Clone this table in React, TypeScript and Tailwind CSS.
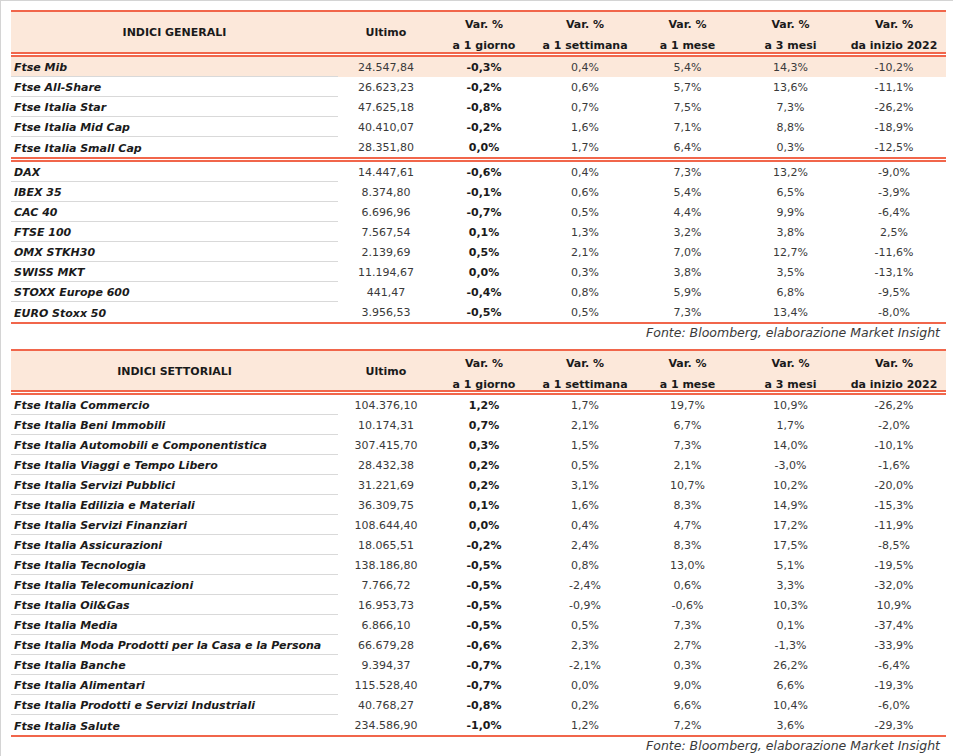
type Row = { name: string; last: string; d1: string; w1: string; m1: string; m3: string; ytd: string };

const r = (name: string, last: string, d1: string, w1: string, m1: string, m3: string, ytd: string): Row => ({
  name,
  last,
  d1,
  w1,
  m1,
  m3,
  ytd,
});

// Italian indices (first block of the first table)
const ITALIA: Row[] = [
  r('Ftse Mib', '24.547,84', '-0,3%', '0,4%', '5,4%', '14,3%', '-10,2%'),
  r('Ftse All-Share', '26.623,23', '-0,2%', '0,6%', '5,7%', '13,6%', '-11,1%'),
  r('Ftse Italia Star', '47.625,18', '-0,8%', '0,7%', '7,5%', '7,3%', '-26,2%'),
  r('Ftse Italia Mid Cap', '40.410,07', '-0,2%', '1,6%', '7,1%', '8,8%', '-18,9%'),
  r('Ftse Italia Small Cap', '28.351,80', '0,0%', '1,7%', '6,4%', '0,3%', '-12,5%'),
];

const EUROPA: Row[] = [
  r('DAX', '14.447,61', '-0,6%', '0,4%', '7,3%', '13,2%', '-9,0%'),
  r('IBEX 35', '8.374,80', '-0,1%', '0,6%', '5,4%', '6,5%', '-3,9%'),
  r('CAC 40', '6.696,96', '-0,7%', '0,5%', '4,4%', '9,9%', '-6,4%'),
  r('FTSE 100', '7.567,54', '0,1%', '1,3%', '3,2%', '3,8%', '2,5%'),
  r('OMX STKH30', '2.139,69', '0,5%', '2,1%', '7,0%', '12,7%', '-11,6%'),
  r('SWISS MKT', '11.194,67', '0,0%', '0,3%', '3,8%', '3,5%', '-13,1%'),
  r('STOXX Europe 600', '441,47', '-0,4%', '0,8%', '5,9%', '6,8%', '-9,5%'),
  r('EURO Stoxx 50', '3.956,53', '-0,5%', '0,5%', '7,3%', '13,4%', '-8,0%'),
];

const SETTORI: Row[] = [
  r('Ftse Italia Commercio', '104.376,10', '1,2%', '1,7%', '19,7%', '10,9%', '-26,2%'),
  r('Ftse Italia Beni Immobili', '10.174,31', '0,7%', '2,1%', '6,7%', '1,7%', '-2,0%'),
  r('Ftse Italia Automobili e Componentistica', '307.415,70', '0,3%', '1,5%', '7,3%', '14,0%', '-10,1%'),
  r('Ftse Italia Viaggi e Tempo Libero', '28.432,38', '0,2%', '0,5%', '2,1%', '-3,0%', '-1,6%'),
  r('Ftse Italia Servizi Pubblici', '31.221,69', '0,2%', '3,1%', '10,7%', '10,2%', '-20,0%'),
  r('Ftse Italia Edilizia e Materiali', '36.309,75', '0,1%', '1,6%', '8,3%', '14,9%', '-15,3%'),
  r('Ftse Italia Servizi Finanziari', '108.644,40', '0,0%', '0,4%', '4,7%', '17,2%', '-11,9%'),
  r('Ftse Italia Assicurazioni', '18.065,51', '-0,2%', '2,4%', '8,3%', '17,5%', '-8,5%'),
  r('Ftse Italia Tecnologia', '138.186,80', '-0,5%', '0,8%', '13,0%', '5,1%', '-19,5%'),
  r('Ftse Italia Telecomunicazioni', '7.766,72', '-0,5%', '-2,4%', '0,6%', '3,3%', '-32,0%'),
  r('Ftse Italia Oil&Gas', '16.953,73', '-0,5%', '-0,9%', '-0,6%', '10,3%', '10,9%'),
  r('Ftse Italia Media', '6.866,10', '-0,5%', '0,5%', '7,3%', '0,1%', '-37,4%'),
  r('Ftse Italia Moda Prodotti per la Casa e la Persona', '66.679,28', '-0,6%', '2,3%', '2,7%', '-1,3%', '-33,9%'),
  r('Ftse Italia Banche', '9.394,37', '-0,7%', '-2,1%', '0,3%', '26,2%', '-6,4%'),
  r('Ftse Italia Alimentari', '115.528,40', '-0,7%', '0,0%', '9,0%', '6,6%', '-19,3%'),
  r('Ftse Italia Prodotti e Servizi Industriali', '40.768,27', '-0,8%', '0,2%', '6,6%', '10,4%', '-6,0%'),
  r('Ftse Italia Salute', '234.586,90', '-1,0%', '1,2%', '7,2%', '3,6%', '-29,3%'),
];

const FONT = { fontFamily: '"DejaVu Sans", "Liberation Sans", sans-serif' };

const VAR_W = ['w-[100px]', 'w-[102px]', 'w-[103px]', 'w-[103px]', 'w-[104px]'];

function RedLine() {
  return <div className="h-[2px] bg-[#f1664b]" />;
}

function DoubleLine() {
  return (
    <div className="flex flex-col">
      <div className="h-[2px] bg-[#f1664b]" />
      <div className="h-px bg-white" />
      <div className="h-[2px] bg-[#f1664b]" />
    </div>
  );
}

function Header({ title, h }: { title: string; h: string }) {
  const vars = ['a 1 giorno', 'a 1 settimana', 'a 1 mese', 'a 3 mesi', 'da inizio 2022'];
  return (
    <div className={`flex bg-[#fce8da] text-[11px] font-bold text-[#1a1a1a] ${h}`}>
      <div className="flex w-[327px] items-center justify-center pt-[3px]">{title}</div>
      <div className="flex w-[96px] items-center justify-center pt-[3px]">Ultimo</div>
      {vars.map((v, i) => (
        <div key={v} className={`flex flex-col items-center pt-[2px] leading-[21px] ${VAR_W[i]}`}>
          <span>Var. %</span>
          <span>{v}</span>
        </div>
      ))}
    </div>
  );
}

function Rows({ rows, highlightFirst = false }: { rows: Row[]; highlightFirst?: boolean }) {
  return (
    <div className="flex flex-col">
      {rows.map((row, i) => (
        <div
          key={row.name}
          className={`flex h-5 items-center text-[11px] ${highlightFirst && i === 0 ? 'bg-[#fce8da]' : ''}`}
        >
          <div
            className={`flex h-5 w-[327px] items-center pl-[3px] pt-[4px] font-bold italic text-[#1a1a1a] ${
              i < rows.length - 1 ? 'border-b border-[#d9d9d9]' : ''
            }`}
          >
            {row.name}
          </div>
          <div className="w-[96px] pt-[3px] text-center text-[#3a3a3a]">{row.last}</div>
          <div className="w-[100px] pt-[3px] text-center font-bold text-[#1a1a1a]">{row.d1}</div>
          <div className="w-[102px] pt-[3px] text-center text-[#3a3a3a]">{row.w1}</div>
          <div className="w-[103px] pt-[3px] text-center text-[#3a3a3a]">{row.m1}</div>
          <div className="w-[103px] pt-[3px] text-center text-[#3a3a3a]">{row.m3}</div>
          <div className="w-[104px] pt-[3px] text-center text-[#3a3a3a]">{row.ytd}</div>
        </div>
      ))}
    </div>
  );
}

function Fonte() {
  return (
    <div className="pr-[6px] pt-px text-right text-[12.5px] leading-4 italic text-[#3a3a3a]">
      Fonte: Bloomberg, elaborazione Market Insight
    </div>
  );
}

export default function App() {
  return (
    <div className="min-h-[756px] border-l border-t border-[#d4d4d4] bg-white pl-[10px] pt-[9px]" style={FONT}>
      <div className="w-[935px]">
        <RedLine />
        <Header title="INDICI GENERALI" h="h-[40px]" />
        <DoubleLine />
        <Rows rows={ITALIA} highlightFirst />
        <DoubleLine />
        <Rows rows={EUROPA} />
        <RedLine />
        <Fonte />

        <div className="mt-[8px]">
          <RedLine />
          <Header title="INDICI SETTORIALI" h="h-[39px]" />
          <DoubleLine />
          <Rows rows={SETTORI} />
          <RedLine />
          <Fonte />
        </div>
      </div>
    </div>
  );
}
